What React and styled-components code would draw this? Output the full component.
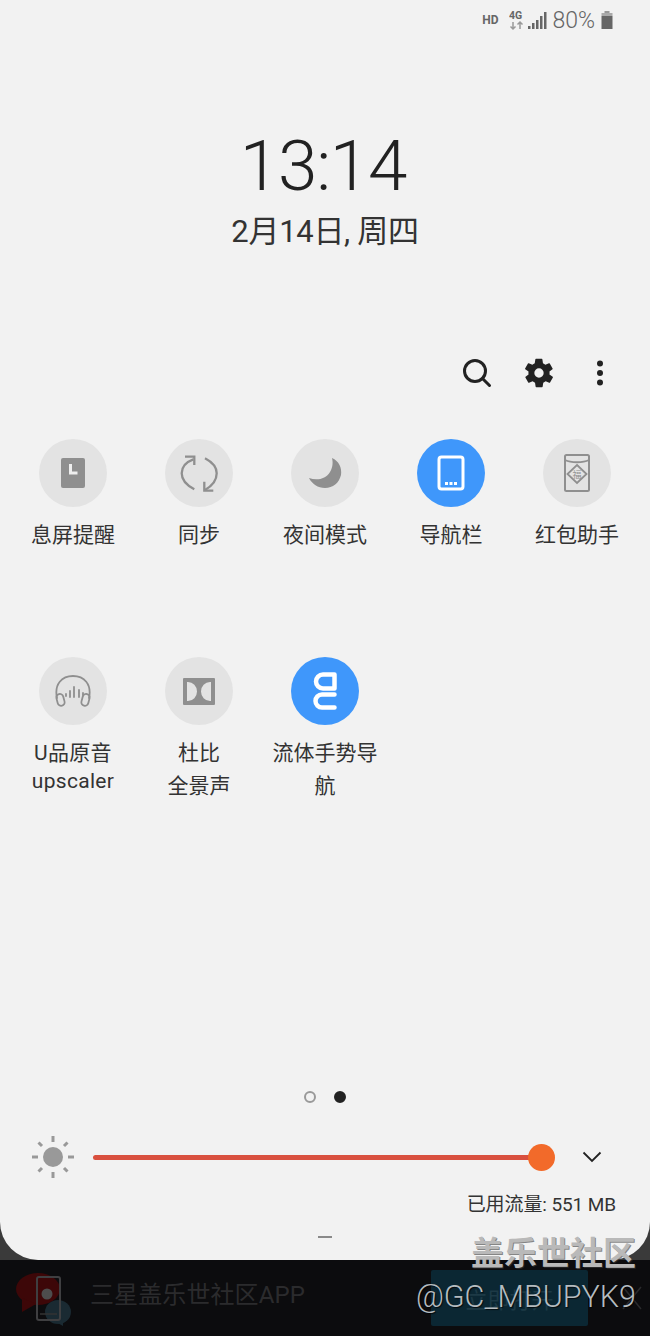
import React from "react";
import styled, { createGlobalStyle } from "styled-components";

const CJK = `Roboto, "Noto Sans CJK SC", sans-serif`;

const Global = createGlobalStyle`
  html, body { margin: 0; padding: 0; background: #0c0c0e; }
  body { font-family: ${CJK}; }
`;
const Screen = styled.div`position: relative; width: 650px; height: 1336px; overflow: hidden; background: #0c0c0e;`;
const PanelBack = styled.div`height: 1260px; background: linear-gradient(#3a3a3a, #3a3a3a) bottom / 100% 50px no-repeat, #f2f2f2;`;
const Panel = styled.div`height: 1260px; box-sizing: border-box; background: #f2f2f2; border-radius: 0 0 38px 38px; display: flex; flex-direction: column;`;
const StatusBar = styled.div`height: 40px; display: flex; align-items: center; justify-content: flex-end; padding: 0 36px 0 0; color: #666; gap: 5px;`;
const Hd = styled.span`font-size: 12px; font-weight: 700; color: #666; margin-right: 6px;`;
const Battery = styled.span`font-size: 23px; font-weight: 300; color: #666; line-height: 1;`;
const Clock = styled.div`margin-top: 86px; height: 80px; padding-right: 4px; text-align: center; font-family: Roboto, sans-serif; font-size: 71px; font-weight: 300; line-height: 80px; color: #222; letter-spacing: -1.2px;`;
const DateLine = styled.div`margin-top: 6px; height: 40px; line-height: 40px; text-align: center; font-size: 31px; font-weight: 400; color: #333; letter-spacing: -0.3px;`;
const Actions = styled.div`margin-top: 101px; height: 40px; display: flex; align-items: center; justify-content: flex-end; gap: 30px; padding-right: 46px;`;
const MoreSlot = styled.div`margin-left: 10px; display: flex;`;
const Grid = styled.div`margin-top: 46px; padding-left: 10px; display: grid; grid-template-columns: repeat(5, 126px); grid-auto-rows: 218px;`;
const Tile = styled.div`display: flex; flex-direction: column; align-items: center;`;
const Circle = styled.div`width: 68px; height: 68px; border-radius: 50%; background: ${p => (p.$on ? "#3f97fb" : "#e3e3e3")}; display: flex; align-items: center; justify-content: center;`;
const Label = styled.div`margin-top: ${p => (p.$tight ? 14 : 12)}px; width: 126px; text-align: center; font-size: 21px; font-weight: 400; line-height: ${p => (p.$tight ? 28 : 33)}px; color: #333; white-space: pre-line; letter-spacing: ${p => (p.$tight ? 0.3 : 0)}px;`;
const Spacer = styled.div`flex: 1;`;
const Pager = styled.div`display: flex; justify-content: center; gap: 18px; height: 12px; margin-bottom: 36px;`;
const Dot = styled.div`width: 12px; height: 12px; box-sizing: border-box; border-radius: 50%; border: 2px solid ${p => (p.$on ? "#222" : "#999")}; background: ${p => (p.$on ? "#222" : "transparent")};`;
const SliderRow = styled.div`height: 36px; display: flex; align-items: center; padding-left: 32px;`;
const SunSlot = styled.div`width: 42px; height: 42px; display: flex; align-items: center; justify-content: center;`;
const Track = styled.div`position: relative; margin-left: 19px; width: 448px; height: 5px; border-radius: 3px; background: #d9503f;`;
const Thumb = styled.div`position: absolute; right: -14px; top: -11px; width: 27px; height: 27px; border-radius: 50%; background: #f26a2a;`;
const ChevronSlot = styled.div`margin-left: 41px; display: flex;`;
const Usage = styled.div`margin-top: 16px; height: 28px; line-height: 28px; text-align: right; padding-right: 34px; font-size: 19px; color: #333; letter-spacing: -0.1px;`;
const Handle = styled.div`width: 14px; height: 2px; background: #8a8a8a; margin: 17px auto 22px;`;
const Ad = styled.div`height: 76px; display: flex; align-items: center; padding-left: 16px; background: #0c0c0e;`;
const AdLogo = styled.div`width: 60px; height: 60px; display: flex;`;
const AdText = styled.div`margin-left: 14px; padding-bottom: 12px; font-size: 24px; letter-spacing: 0.1px; color: #2b2b2d; width: 341px; white-space: nowrap;`;
const AdButton = styled.div`width: 157px; height: 56px; border-radius: 2px; background: #0b2733; color: #1d3a46; font-size: 22px; display: flex; align-items: center; justify-content: center;`;
const AdClose = styled.div`margin-left: 34px; display: flex;`;
const Watermark = styled.div`position: absolute; right: 14px; top: 1234px; text-align: right; pointer-events: none;`;
const MarkTitle = styled.div`font-size: 33px; font-weight: 700; line-height: 40px; color: #b9b9b9; text-shadow: 1px 1px 0 rgba(60,60,60,.6);`;
const MarkId = styled.div`font-size: 30.5px; font-weight: 300; line-height: 40px; margin-top: 3px; color: #b5bcc0; text-shadow: 1px 1px 1px rgba(0,0,0,.7);`;

const grey = "#8f8f8f";

const Signal = () => (
  <svg width="38" height="22" viewBox="0 -2 38 22">
    <text x="0" y="8" fontSize="10.500" fontWeight="700" fontFamily="Roboto" fill="#666">4G</text>
    <path d="M4 11v7M1.500 15.500L4 18l2.500-2.500" stroke="#999" strokeWidth="1.500" fill="none" />
    <path d="M11 18v-7M8.500 13.500L11 11l2.500 2.500" stroke="#999" strokeWidth="1.500" fill="none" />
    <path d="M19 15h2.500v3H19zM23 12h2.500v6H23zM27 9h2.500v9H27zM31 5h2.500v13H31zM35 1h2.500v17H35z" fill="#666" />
  </svg>
);
const BatteryIcon = () => (
  <svg width="14" height="20" viewBox="0 0 14 20">
    <path d="M4.500 1h5v2h-5z" fill="#999" />
    <path d="M1.500 3h11v3h-11z" fill="#aaa" />
    <path d="M1.500 6h11v13h-11z" fill="#666" />
  </svg>
);
const Search = () => (
  <svg width="30" height="30" viewBox="0 0 30 30" fill="none" stroke="#222" strokeWidth="3">
    <circle cx="13" cy="13" r="10.500" />
    <path d="M20.500 20.500L27.500 27.500" strokeLinecap="round" />
  </svg>
);
const Gear = () => (
  <svg width="34" height="34" viewBox="0 0 24 24">
    <path fill="#222" fillRule="evenodd" d="M19.400 13a7.600 7.600 0 0 0 0-2l2.100-1.600a.5.5 0 0 0 .1-.6l-2-3.500a.5.5 0 0 0-.6-.2l-2.500 1a7.300 7.300 0 0 0-1.700-1l-.4-2.600a.5.5 0 0 0-.5-.5h-4a.5.5 0 0 0-.5.5l-.4 2.600a7.300 7.300 0 0 0-1.700 1l-2.500-1a.5.5 0 0 0-.6.2l-2 3.500a.5.5 0 0 0 .1.600L4.600 11a7.600 7.600 0 0 0 0 2l-2.100 1.600a.5.5 0 0 0-.1.6l2 3.500a.5.5 0 0 0 .6.2l2.500-1a7.300 7.300 0 0 0 1.700 1l.4 2.600a.5.5 0 0 0 .5.5h4a.5.5 0 0 0 .5-.5l.4-2.600a7.300 7.300 0 0 0 1.700-1l2.500 1a.5.5 0 0 0 .6-.2l2-3.500a.5.5 0 0 0-.1-.6zM12 15.300a3.300 3.300 0 1 1 0-6.600 3.300 3.300 0 0 1 0 6.600z" />
  </svg>
);
const More = () => (
  <svg width="8" height="28" viewBox="0 0 8 28" fill="#222">
    <circle cx="4" cy="4.500" r="3" /><circle cx="4" cy="14" r="3" /><circle cx="4" cy="23.500" r="3" />
  </svg>
);
const AodIcon = () => (
  <svg width="26" height="32" viewBox="0 0 26 32">
    <rect x="1" y="1" width="24" height="30" rx="2" fill={grey} />
    <path d="M10.500 7v9h7" fill="none" stroke="#eee" strokeWidth="3" />
  </svg>
);
const SyncIcon = () => (
  <svg width="38" height="38" viewBox="0 0 38 38" fill="none" stroke={grey} strokeWidth="2.300">
    <path d="M14.300 35.300C6 31 1.700 26 1.700 19.300C1.700 13 6 8 13.300 5.300" />
    <path d="M5 2.700h9.300v8.300" />
    <path d="M25 4.300C32 8 36.700 13 36.700 19.300C36.700 26 32 32 25 36" />
    <path d="M33.300 36.700h-9v-9" />
  </svg>
);
const MoonIcon = () => (
  <svg width="34" height="32" viewBox="0 0 34 32">
    <path fill={grey} d="M24 1c7 3 10 10 9 17-2 8-8 13-16 13C10 31 4 27 1 21c8 3 17 1 21-6 3-5 3-10 2-14z" />
  </svg>
);
const TabletIcon = () => (
  <svg width="28" height="36" viewBox="0 0 28 36">
    <rect x="2" y="2" width="24" height="32" rx="2.500" fill="none" stroke="#fff" strokeWidth="3" />
    <path fill="#fff" d="M8 27h3v3H8zM12.500 27h3v3h-3zM17 27h3v3h-3z" />
  </svg>
);
const EnvelopeIcon = () => (
  <svg width="28" height="40" viewBox="0 0 28 40" fill="none" stroke={grey} strokeWidth="1.800">
    <rect x="2" y="2" width="24" height="36" rx="1.500" strokeWidth="2" />
    <path d="M2 7c6 3 18 3 24 0" />
    <path d="M14 12l9.500 9-9.500 9-9.500-9z" />
    <text x="14" y="25" fontSize="9" textAnchor="middle" fill={grey} stroke="none" fontFamily={`"Noto Sans CJK SC"`}>福</text>
  </svg>
);
const HeadIcon = () => (
  <svg width="38" height="34" viewBox="0 0 38 34" fill="none" stroke={grey} strokeWidth="1.800" strokeLinecap="round">
    <path d="M3 24C0 10 8 2 19 2s19 8 16 22" />
    <rect x="3" y="20" width="7" height="12" rx="3.500" transform="rotate(-15 6 26)" />
    <rect x="28" y="20" width="7" height="12" rx="3.500" transform="rotate(15 32 26)" />
    <path d="M12 20v2M16 17v6M20 13v10M25 16v7M29 19v2" strokeWidth="1.800" />
  </svg>
);
const DolbyIcon = () => (
  <svg width="32" height="27" viewBox="0 0 32 27">
    <path fill={grey} fillRule="evenodd" d="M0 1a1 1 0 0 1 1-1h30a1 1 0 0 1 1 1v25a1 1 0 0 1-1 1H1a1 1 0 0 1-1-1zM4 4v19h1a9 9.500 0 0 0 0-19zM28 4v19h-1a9 9.500 0 0 1 0-19z" />
  </svg>
);
const FluidIcon = () => (
  <svg width="24" height="40" viewBox="0 0 24 40" fill="none" stroke="#fff" strokeWidth="4.500" strokeLinejoin="round" strokeLinecap="round">
    <path d="M21.500 3.500H10a7 7 0 0 0 0 14H21.500z" />
    <path d="M21.500 23.500H9a6.500 6.500 0 0 0 0 13H21.500" />
  </svg>
);
const Sun = () => (
  <svg width="42" height="42" viewBox="0 0 42 42" fill="#999">
    <circle cx="21" cy="21" r="10" />
    <g stroke="#999" strokeWidth="3">
      <path d="M21 0v6M21 36v6M0 21h6M36 21h6M6.500 6.500l3.500 3.500M32 32l3.500 3.500M6.500 35.500l3.500-3.500M32 10l3.500-3.500" />
    </g>
  </svg>
);
const Chevron = () => (
  <svg width="20" height="12" viewBox="0 0 20 12" fill="none" stroke="#222" strokeWidth="1.800">
    <path d="M1.500 1.500L10 10l8.500-8.500" />
  </svg>
);
const Logo = () => (
  <svg width="60" height="60" viewBox="0 0 60 60">
    <ellipse cx="22" cy="21" rx="22" ry="16" fill="#3d0708" />
    <path d="M6 30l0 14 14-8z" fill="#3d0708" />
    <ellipse cx="42" cy="44" rx="13" ry="12" fill="#1a2a32" />
    <path d="M40 54l7 4 0-8z" fill="#1a2a32" />
    <rect x="21" y="9" width="23" height="43" rx="2" fill="none" stroke="#3f3f41" strokeWidth="2" />
    <path d="M24 46h17" stroke="#333" strokeWidth="1.500" />
    <circle cx="31" cy="26" r="5.500" fill="#4d4d4d" />
  </svg>
);
const Close = () => (
  <svg width="20" height="24" viewBox="0 0 20 24" fill="none" stroke="#2a2a2c" strokeWidth="1.500">
    <path d="M19 1L1 23M1 1l18 22" />
  </svg>
);

const tiles = [
  { label: "息屏提醒", icon: <AodIcon /> },
  { label: "同步", icon: <SyncIcon /> },
  { label: "夜间模式", icon: <MoonIcon /> },
  { label: "导航栏", icon: <TabletIcon />, on: true },
  { label: "红包助手", icon: <EnvelopeIcon /> },
  { label: "U品原音\nupscaler", icon: <HeadIcon />, tight: true },
  { label: "杜比\n全景声", icon: <DolbyIcon /> },
  { label: "流体手势导\n航", icon: <FluidIcon />, on: true },
];

export default function App() {
  return (
    <Screen>
      <Global />
      <PanelBack>
        <Panel>
          <StatusBar>
            <Hd>HD</Hd>
            <Signal />
            <Battery>80%</Battery>
            <BatteryIcon />
          </StatusBar>
          <Clock>13:14</Clock>
          <DateLine>2月14日, 周四</DateLine>
          <Actions>
            <Search />
            <Gear />
            <MoreSlot><More /></MoreSlot>
          </Actions>
          <Grid>
            {tiles.map(t => (
              <Tile key={t.label}>
                <Circle $on={t.on}>{t.icon}</Circle>
                <Label $tight={t.tight}>{t.label}</Label>
              </Tile>
            ))}
          </Grid>
          <Spacer />
          <Pager>
            <Dot />
            <Dot $on />
          </Pager>
          <SliderRow>
            <SunSlot><Sun /></SunSlot>
            <Track><Thumb /></Track>
            <ChevronSlot><Chevron /></ChevronSlot>
          </SliderRow>
          <Usage>已用流量: 551 MB</Usage>
          <Handle />
        </Panel>
      </PanelBack>
      <Ad>
        <AdLogo><Logo /></AdLogo>
        <AdText>三星盖乐世社区APP</AdText>
        <AdButton>立即打开</AdButton>
        <AdClose><Close /></AdClose>
      </Ad>
      <Watermark>
        <MarkTitle>盖乐世社区</MarkTitle>
        <MarkId>@GC_MBUPYK9</MarkId>
      </Watermark>
    </Screen>
  );
}
